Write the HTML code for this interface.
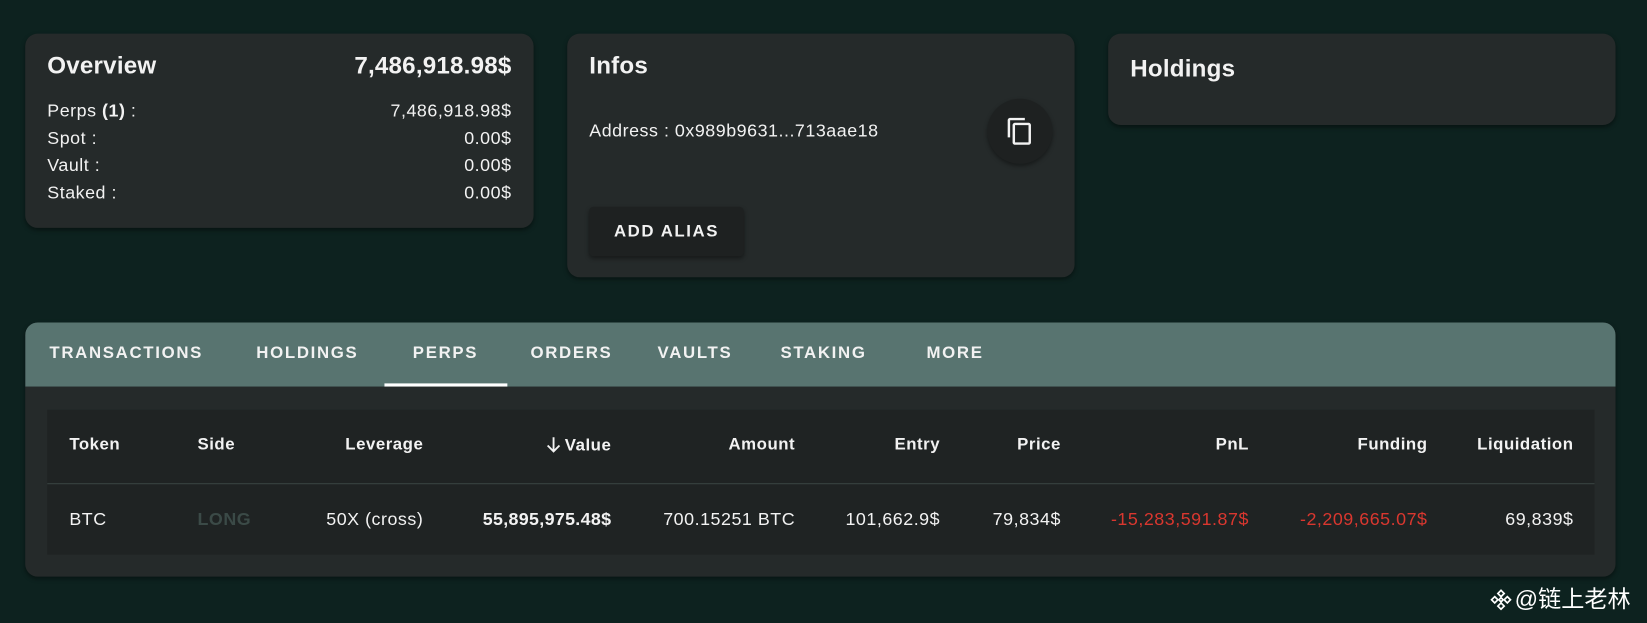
<!DOCTYPE html>
<html><head><meta charset="utf-8"><style>
html,body{margin:0;padding:0;background:#0d221f;width:1647px;height:623px;overflow:hidden}
#w{position:absolute;left:0;top:0;width:1568px;height:593px;transform:scale(1.0504);transform-origin:0 0;font-family:"Liberation Sans","Noto Sans CJK SC",sans-serif;color:#f2f2f2}
.card{position:absolute;background:#252a2a;border-radius:12px;box-shadow:0 2px 4px rgba(0,0,0,.4)}
.a{position:absolute;white-space:nowrap;font-size:17px;line-height:20px;letter-spacing:0.5px}
.t{font-size:23px;line-height:28px;font-weight:bold;letter-spacing:0.2px}
.r{text-align:right}
.h{font-weight:bold;font-size:16px;letter-spacing:0.5px}
.tab{position:absolute;top:327px;font-size:16px;letter-spacing:1.6px;font-weight:bold;line-height:20px}
.red{color:#d9372f}
</style></head><body><div id="w">
<div class="card" style="left:24px;top:32px;width:484px;height:185px"></div>
<div class="a t" style="left:45px;top:48px">Overview</div>
<div class="a t" style="right:1081px;top:48px">7,486,918.98$</div>
<div class="a" style="left:45px;top:96px">Perps <b>(1)</b> :</div>
<div class="a" style="right:1081px;top:96px">7,486,918.98$</div>
<div class="a" style="left:45px;top:122px">Spot :</div>
<div class="a" style="right:1081px;top:122px">0.00$</div>
<div class="a" style="left:45px;top:148px">Vault :</div>
<div class="a" style="right:1081px;top:148px">0.00$</div>
<div class="a" style="left:45px;top:174px">Staked :</div>
<div class="a" style="right:1081px;top:174px">0.00$</div>

<div class="card" style="left:540px;top:32px;width:483px;height:232px"></div>
<div class="a t" style="left:561px;top:48px">Infos</div>
<div class="a" style="left:561px;top:115px">Address : 0x989b9631...713aae18</div>
<div style="position:absolute;left:940px;top:94px;width:62px;height:62px;border-radius:50%;background:#1e2121;box-shadow:0 2px 4px rgba(0,0,0,.4)"></div>
<svg style="position:absolute;left:957px;top:111px" width="28" height="28" viewBox="0 0 24 24"><path fill="#f2f2f2" d="M16 1H4c-1.1 0-2 .9-2 2v14h2V3h12V1zm3 4H8c-1.1 0-2 .9-2 2v14c0 1.1.9 2 2 2h11c1.1 0 2-.9 2-2V7c0-1.1-.9-2-2-2zm0 16H8V7h11v14z"/></svg>
<div style="position:absolute;left:561px;top:197px;width:147px;height:47px;background:#1e2121;border-radius:4px;box-shadow:0 2px 4px rgba(0,0,0,.4)"></div>
<div class="a" style="left:561px;width:147px;top:211px;text-align:center;letter-spacing:1.5px;font-weight:bold;font-size:16px">ADD ALIAS</div>

<div class="card" style="left:1055px;top:32px;width:483px;height:87px"></div>
<div class="a t" style="left:1076px;top:51px">Holdings</div>

<div class="card" style="left:24px;top:307px;width:1514px;height:242px;overflow:hidden">
<div style="position:absolute;left:0;top:0;right:0;height:61px;background:#587470"></div>
</div>
<div class="tab" style="left:47px">TRANSACTIONS</div>
<div class="tab" style="left:244px">HOLDINGS</div>
<div class="tab" style="left:393px">PERPS</div>
<div class="tab" style="left:505px">ORDERS</div>
<div class="tab" style="left:626px">VAULTS</div>
<div class="tab" style="left:743px">STAKING</div>
<div class="tab" style="left:882px">MORE</div>
<div style="position:absolute;left:366px;top:365px;width:117px;height:3px;background:#fff"></div>

<div style="position:absolute;left:45px;top:390px;width:1473px;height:138px;background:#1f2323"></div>
<div style="position:absolute;left:45px;top:460px;width:1473px;height:1px;background:#3a4442"></div>
<div class="a h" style="left:66px;top:414px">Token</div>
<div class="a h" style="left:188px;top:414px">Side</div>
<div class="a r h" style="right:1165px;top:414px">Leverage</div>
<div class="a r h" style="right:986px;top:414px"><svg width="18" height="18" viewBox="0 0 16 16" style="vertical-align:-3px;margin-right:2px"><path d="M8 2v12M3 9l5 5 5-5" stroke="#f2f2f2" stroke-width="1.6" fill="none"/></svg>Value</div>
<div class="a r h" style="right:811px;top:414px">Amount</div>
<div class="a r h" style="right:673px;top:414px">Entry</div>
<div class="a r h" style="right:558px;top:414px">Price</div>
<div class="a r h" style="right:379px;top:414px">PnL</div>
<div class="a r h" style="right:209px;top:414px">Funding</div>
<div class="a r h" style="right:70px;top:414px">Liquidation</div>

<div class="a" style="left:66px;top:485px">BTC</div>
<div class="a" style="left:188px;top:485px;color:#3b4a47;font-weight:bold">LONG</div>
<div class="a r" style="right:1165px;top:485px">50X (cross)</div>
<div class="a r" style="right:986px;top:485px;font-weight:bold;letter-spacing:0.3px">55,895,975.48$</div>
<div class="a r" style="right:811px;top:485px">700.15251 BTC</div>
<div class="a r" style="right:673px;top:485px">101,662.9$</div>
<div class="a r" style="right:558px;top:485px">79,834$</div>
<div class="a r red" style="right:379px;top:485px">-15,283,591.87$</div>
<div class="a r red" style="right:209px;top:485px">-2,209,665.07$</div>
<div class="a r" style="right:70px;top:485px">69,839$</div>

<svg style="position:absolute;left:1418px;top:560px" width="22" height="22" viewBox="0 0 22 22"><g fill="none" stroke="#fff" stroke-width="1.6"><path d="M11 2l3 3-3 3-3-3z"/><path d="M5 8l3 3-3 3-3-3z"/><path d="M17 8l3 3-3 3-3-3z"/><path d="M11 14l3 3-3 3-3-3z"/><path d="M11 9l2 2-2 2-2-2z"/></g></svg>
<div class="a" style="left:1442px;top:558px;font-size:22px;line-height:26px;color:#fff;letter-spacing:0">@链上老林</div>
</div></body></html>
